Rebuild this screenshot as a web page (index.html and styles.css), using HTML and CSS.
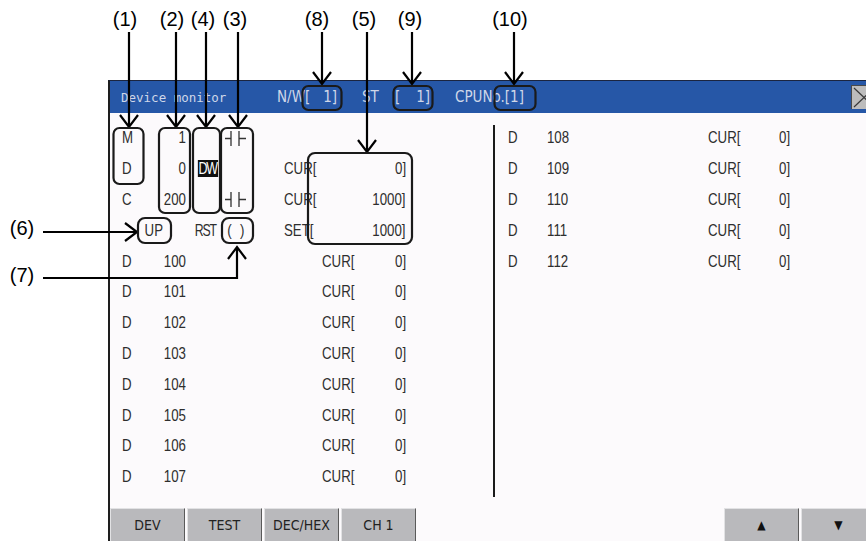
FILE: index.html
```html
<!DOCTYPE html>
<html>
<head>
    <title>Device monitor</title>
    <link rel="stylesheet" href="styles.css">
</head>
<body>
    <div class="page">
        <div class="screen">
            <div class="title-bar">
                <span class="title">Device monitor</span>
                <span class="tb-field nw"><span>N/W[</span><span>1]</span></span>
                <span class="tb-label">ST</span>
                <span class="tb-field stv"><span>[</span><span>1]</span></span>
                <span class="cpu">CPUNo.[1]</span>
                <span class="close-btn">
                    <svg width="24" height="23" viewBox="0 0 24 23"><path d="M2 2L22 21M22 2L2 21" stroke="#3a3a3a" stroke-width="1.2"/></svg>
                </span>
            </div>

            <div class="monitor">
                <div class="panel left">
                    <div class="row">
                        <span class="dev">M</span><span class="num">1</span><span class="op"></span>
                        <span class="sym"><svg width="21" height="15" viewBox="0 0 21 15"><path d="M0 7.5H6M6 0V15M14 0V15M14 7.5H21" stroke="#333" stroke-width="1.3" fill="none"/></svg></span>
                    </div>
                    <div class="row">
                        <span class="dev">D</span><span class="num">0</span><span class="op"><span class="inv">DW</span></span><span class="sym"></span>
                        <span class="tail wide"><span>CUR[</span><span>0]</span></span>
                    </div>
                    <div class="row">
                        <span class="dev">C</span><span class="num">200</span><span class="op"></span>
                        <span class="sym"><svg width="21" height="15" viewBox="0 0 21 15"><path d="M0 7.5H6M6 0V15M14 0V15M14 7.5H21" stroke="#333" stroke-width="1.3" fill="none"/></svg></span>
                        <span class="tail wide"><span>CUR[</span><span>1000]</span></span>
                    </div>
                    <div class="row">
                        <span class="up">UP</span><span class="op rst">RST</span><span class="coil">( )</span>
                        <span class="tail wide"><span>SET[</span><span>1000]</span></span>
                    </div>
                    <div class="row"><span class="dev">D</span><span class="num">100</span><span class="tail"><span>CUR[</span><span>0]</span></span></div>
                    <div class="row"><span class="dev">D</span><span class="num">101</span><span class="tail"><span>CUR[</span><span>0]</span></span></div>
                    <div class="row"><span class="dev">D</span><span class="num">102</span><span class="tail"><span>CUR[</span><span>0]</span></span></div>
                    <div class="row"><span class="dev">D</span><span class="num">103</span><span class="tail"><span>CUR[</span><span>0]</span></span></div>
                    <div class="row"><span class="dev">D</span><span class="num">104</span><span class="tail"><span>CUR[</span><span>0]</span></span></div>
                    <div class="row"><span class="dev">D</span><span class="num">105</span><span class="tail"><span>CUR[</span><span>0]</span></span></div>
                    <div class="row"><span class="dev">D</span><span class="num">106</span><span class="tail"><span>CUR[</span><span>0]</span></span></div>
                    <div class="row"><span class="dev">D</span><span class="num">107</span><span class="tail"><span>CUR[</span><span>0]</span></span></div>
                </div>

                <div class="divider"></div>

                <div class="panel right">
                    <div class="row"><span class="dev">D</span><span class="num">108</span><span class="tail"><span>CUR[</span><span>0]</span></span></div>
                    <div class="row"><span class="dev">D</span><span class="num">109</span><span class="tail"><span>CUR[</span><span>0]</span></span></div>
                    <div class="row"><span class="dev">D</span><span class="num">110</span><span class="tail"><span>CUR[</span><span>0]</span></span></div>
                    <div class="row"><span class="dev">D</span><span class="num">111</span><span class="tail"><span>CUR[</span><span>0]</span></span></div>
                    <div class="row"><span class="dev">D</span><span class="num">112</span><span class="tail"><span>CUR[</span><span>0]</span></span></div>
                </div>
            </div>

            <div class="key-bar">
                <span class="key">DEV</span>
                <span class="key">TEST</span>
                <span class="key">DEC/HEX</span>
                <span class="key">CH 1</span>
                <span class="key arrow push">&#9650;</span>
                <span class="key arrow last">&#9660;</span>
            </div>
        </div>

        <!-- numbered callouts drawn over the screen -->
        <svg class="callouts" width="866" height="541" viewBox="0 0 866 541">
            <g class="labels">
                <text x="125" y="26">(1)</text>
                <text x="172" y="26">(2)</text>
                <text x="203" y="26">(4)</text>
                <text x="235" y="26">(3)</text>
                <text x="317" y="26">(8)</text>
                <text x="364" y="26">(5)</text>
                <text x="410" y="26">(9)</text>
                <text x="510" y="26">(10)</text>
                <text x="22" y="235">(6)</text>
                <text x="22" y="282">(7)</text>
            </g>
            <g class="lines">
                <path d="M129 32V127M120 115L129 127L138 115"/>
                <path d="M176 32V127M167 115L176 127L185 115"/>
                <path d="M206 32V127M197 115L206 127L215 115"/>
                <path d="M238 32V127M229 115L238 127L247 115"/>
                <path d="M322 32V84M313 72L322 84L331 72"/>
                <path d="M367 32V152M358 140L367 152L376 140"/>
                <path d="M412 32V84M403 72L412 84L421 72"/>
                <path d="M514 32V84M505 72L514 84L523 72"/>
                <path d="M43 232H137M125 223L137 232L125 241"/>
                <path d="M43 278H237V247M228 259L237 247L246 259"/>
            </g>
            <g class="boxes">
                <rect x="113.5" y="128" width="30" height="56" rx="6"/>
                <rect x="159" y="128" width="31" height="85" rx="6"/>
                <rect x="193" y="128" width="27" height="85" rx="6"/>
                <rect x="221" y="128" width="32" height="85" rx="6"/>
                <rect x="308" y="153" width="104" height="91" rx="7"/>
                <rect x="138" y="218" width="33" height="25" rx="7"/>
                <rect x="222" y="218" width="31" height="25" rx="7"/>
                <rect x="302.5" y="86" width="39" height="24" rx="6"/>
                <rect x="393.5" y="86" width="39" height="24" rx="6"/>
                <rect x="494.5" y="86" width="41" height="24" rx="6"/>
            </g>
        </svg>
    </div>
</body>
</html>
```

FILE: styles.css
```css
body {
    margin: 0;
    width: 866px;
    height: 541px;
    overflow: hidden;
    background-color: #ffffff;
    font-family: "DejaVu Sans Condensed", "Liberation Sans", sans-serif;
}

.page {
    position: relative;
    height: 541px;
    padding: 80px 0 0 108px;
    box-sizing: border-box;
}

.screen {
    width: 758px;
    height: 461px;
    box-sizing: border-box;
    border-left: 2px solid #1e1e1e;
    border-top: 1px solid #1b2540;
    background-color: #fcfafc;
    display: flex;
    flex-direction: column;
}

/* title bar */
.title-bar {
    flex: none;
    height: 32px;
    background-color: #2657a7;
    display: flex;
    align-items: center;
    padding-left: 11px;
    color: #cfd7e9;
    font-size: 15px;
}

.title {
    width: 156px;
    font-family: "DejaVu Sans Mono", monospace;
    font-size: 12.5px;
}

.tb-field {
    display: flex;
    justify-content: space-between;
}

.nw {
    width: 60px;
    margin-right: 25px;
}

.tb-label {
    width: 33px;
}

.stv {
    width: 35px;
    margin-right: 25px;
}

.close-btn {
    margin-left: auto;
    margin-right: -10px;
    width: 24px;
    height: 23px;
    background-color: #bdbdbd;
    border-left: 1px solid #4a4a4a;
    border-top: 1px solid #4a4a4a;
    display: flex;
}

/* monitor area: narrow HMI lettering */
.monitor {
    flex: 1;
    display: flex;
    color: #2e2e2e;
    font-family: "Liberation Sans", Arial, sans-serif;
    font-size: 17px;
}

.panel {
    box-sizing: border-box;
    padding-top: 10px;
}

.panel.left {
    width: 383px;
    padding-left: 12px;
    padding-right: 87px;
}

.panel.right {
    flex: 1;
    padding-left: 13px;
    padding-right: 76px;
}

.divider {
    width: 2px;
    background-color: #1a1a1a;
    margin: 12px 0 11px;
}

.row {
    height: 30.8px;
    display: grid;
    align-items: center;
}

.left .row {
    grid-template-columns: 28px 36px 8px 28px 30px 1fr;
}

.right .row {
    grid-template-columns: 39px 40px 1fr;
}

.dev,
.num,
.op,
.up,
.coil,
.tail > span {
    transform: scaleX(0.78);
    transform-origin: left center;
}

.left .num {
    text-align: right;
    transform-origin: right center;
}

.op {
    grid-column: 4;
    text-align: center;
    transform-origin: center;
}

.rst {
    text-align: left;
    padding-left: 1px;
    letter-spacing: -1.5px;
    transform: scaleX(0.72);
    transform-origin: left center;
}

.inv {
    background-color: #111;
    color: #fff;
    font-size: 16px;
    line-height: 15px;
    letter-spacing: -1.5px;
    padding: 0 2px 0 1px;
}

.sym {
    grid-column: 5;
    display: flex;
    padding-left: 3px;
}

.coil {
    grid-column: 5;
    text-align: center;
    letter-spacing: 3px;
    white-space: pre;
    transform-origin: center;
}

.up {
    grid-column: 1 / 3;
    padding-left: 29px;
}

.tail {
    grid-column: -2;
    justify-self: end;
    width: 84px;
    display: flex;
    justify-content: space-between;
}

.tail > span:last-child {
    transform-origin: right center;
}

.tail.wide {
    width: 122px;
}

.right .tail {
    width: 82px;
}

/* bottom keys */
.key-bar {
    flex: none;
    height: 33px;
    display: flex;
    gap: 2px;
}

.key {
    width: 75px;
    box-sizing: border-box;
    background-color: #b9b9bc;
    border-top: 1px solid #e2e2e4;
    border-left: 1px solid #e2e2e4;
    border-right: 1px solid #5a5a5a;
    display: flex;
    align-items: center;
    justify-content: center;
    color: #222;
    font-size: 14px;
}

.arrow {
    font-size: 12px;
    color: #111;
}

.push {
    margin-left: auto;
}

.last {
    margin-right: -10px;
}

/* callouts */
.callouts {
    position: absolute;
    left: 0;
    top: 0;
    pointer-events: none;
}

.callouts text {
    font-family: "Liberation Sans", Arial, sans-serif;
    font-size: 20px;
    text-anchor: middle;
    fill: #000;
}

.callouts .lines path {
    stroke: #000;
    stroke-width: 2.2;
    fill: none;
}

.callouts .boxes rect {
    stroke: #1a1a1a;
    stroke-width: 2.2;
    fill: none;
}
```
